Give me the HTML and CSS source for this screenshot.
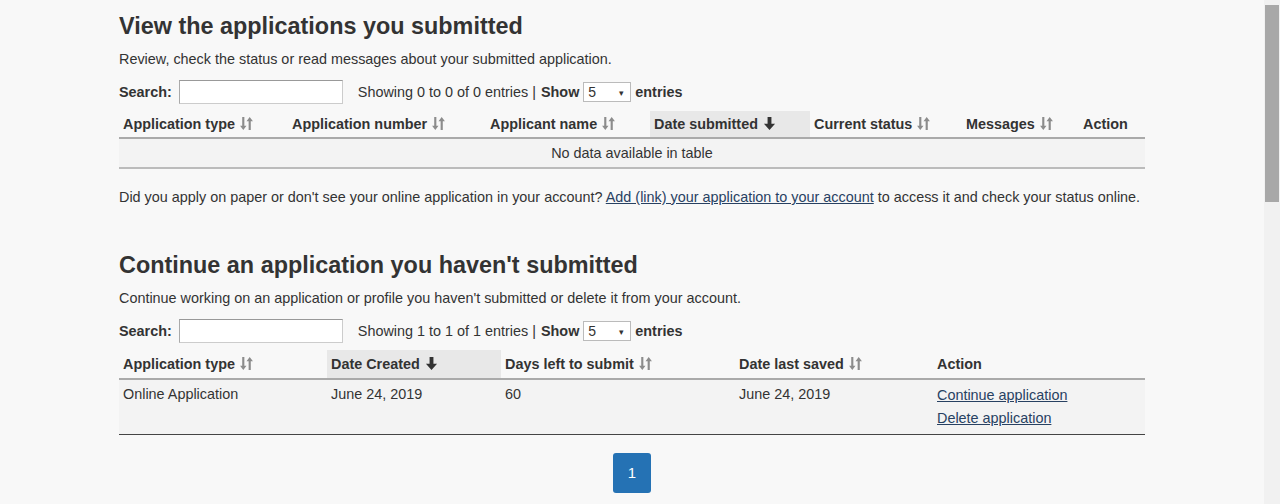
FILE: index.html
```html
<!DOCTYPE html>
<html lang="en">
<head>
    <meta charset="UTF-8">
    <title>My applications</title>
    <link rel="stylesheet" href="styles.css">
</head>
<body>
    <div class="container">
        <h2>View the applications you submitted</h2>
        <p class="intro">Review, check the status or read messages about your submitted application.</p>
        <div class="table-tools">
            <label for="search1">Search:</label>
            <input type="text" id="search1">
            <span class="info">Showing 0 to 0 of 0 entries</span>
            <span class="sep">|</span>
            <b>Show</b>
            <span class="len"><span>5</span><span class="caret">&#9662;</span></span>
            <b>entries</b>
        </div>
        <table class="data submitted">
            <thead>
                <tr>
                    <th style="width:169px">Application type <svg class="sort" viewBox="0 0 12 14"><path d="M2 1h2v8h2L3 13 0 9h2z M8 13h2V5h2L9 1 6 5h2z"/></svg></th>
                    <th style="width:198px">Application number <svg class="sort" viewBox="0 0 12 14"><path d="M2 1h2v8h2L3 13 0 9h2z M8 13h2V5h2L9 1 6 5h2z"/></svg></th>
                    <th style="width:164px">Applicant name <svg class="sort" viewBox="0 0 12 14"><path d="M2 1h2v8h2L3 13 0 9h2z M8 13h2V5h2L9 1 6 5h2z"/></svg></th>
                    <th class="active" style="width:160px">Date submitted <svg class="sorted" viewBox="0 0 12 14"><path d="M4.2 1h3.6v6.2h3.4L6 13 0.8 7.2h3.4z"/></svg></th>
                    <th style="width:152px">Current status <svg class="sort" viewBox="0 0 12 14"><path d="M2 1h2v8h2L3 13 0 9h2z M8 13h2V5h2L9 1 6 5h2z"/></svg></th>
                    <th style="width:117px">Messages <svg class="sort" viewBox="0 0 12 14"><path d="M2 1h2v8h2L3 13 0 9h2z M8 13h2V5h2L9 1 6 5h2z"/></svg></th>
                    <th>Action</th>
                </tr>
            </thead>
            <tbody>
                <tr>
                    <td colspan="7" class="empty">No data available in table</td>
                </tr>
            </tbody>
        </table>
        <p class="note">Did you apply on paper or don't see your online application in your account? <a href="#">Add (link) your application to your account</a> to access it and check your status online.</p>

        <h2 class="second">Continue an application you haven't submitted</h2>
        <p class="intro">Continue working on an application or profile you haven't submitted or delete it from your account.</p>
        <div class="table-tools">
            <label for="search2">Search:</label>
            <input type="text" id="search2">
            <span class="info">Showing 1 to 1 of 1 entries</span>
            <span class="sep">|</span>
            <b>Show</b>
            <span class="len"><span>5</span><span class="caret">&#9662;</span></span>
            <b>entries</b>
        </div>
        <table class="data drafts">
            <thead>
                <tr>
                    <th style="width:208px">Application type <svg class="sort" viewBox="0 0 12 14"><path d="M2 1h2v8h2L3 13 0 9h2z M8 13h2V5h2L9 1 6 5h2z"/></svg></th>
                    <th class="active" style="width:174px">Date Created <svg class="sorted" viewBox="0 0 12 14"><path d="M4.2 1h3.6v6.2h3.4L6 13 0.8 7.2h3.4z"/></svg></th>
                    <th style="width:234px">Days left to submit <svg class="sort" viewBox="0 0 12 14"><path d="M2 1h2v8h2L3 13 0 9h2z M8 13h2V5h2L9 1 6 5h2z"/></svg></th>
                    <th style="width:198px">Date last saved <svg class="sort" viewBox="0 0 12 14"><path d="M2 1h2v8h2L3 13 0 9h2z M8 13h2V5h2L9 1 6 5h2z"/></svg></th>
                    <th>Action</th>
                </tr>
            </thead>
            <tbody>
                <tr>
                    <td>Online Application</td>
                    <td>June 24, 2019</td>
                    <td>60</td>
                    <td>June 24, 2019</td>
                    <td class="actions">
                        <a href="#">Continue application</a>
                        <a href="#">Delete application</a>
                    </td>
                </tr>
            </tbody>
        </table>
        <div class="pager">
            <a href="#" class="page current">1</a>
        </div>
    </div>
    <div class="scrollbar"><div class="thumb"></div></div>
</body>
</html>
```

FILE: styles.css
```css
* {
    margin: 0;
    padding: 0;
    box-sizing: border-box;
}

body {
    background-color: #f8f8f8;
    color: #333;
    font-family: "Liberation Sans", Arial, sans-serif;
    font-size: 14.4px;
    line-height: 20px;
    height: 504px;
    overflow: hidden;
}

.container {
    width: 1026px;
    margin-left: 119px;
    padding-top: 12px;
}

h2 {
    font-size: 23.4px;
    line-height: 28px;
    font-weight: bold;
}

h2.second {
    margin-top: 44px;
}

.intro {
    margin-top: 9px;
}

.table-tools {
    display: flex;
    align-items: center;
    height: 24px;
    margin-top: 11px;
}

.table-tools label {
    font-weight: bold;
    margin-right: 7px;
}

.table-tools input {
    width: 164px;
    height: 24px;
    border: 1px solid #ccc;
    border-top-color: #999;
    border-left-color: #aaa;
    background: #fff;
    margin-right: 15px;
}

.table-tools .sep {
    margin: 0 5px 0 4px;
}

.len {
    position: relative;
    display: inline-flex;
    align-items: center;
    width: 48px;
    height: 20px;
    margin: 0 4px;
    padding-left: 4px;
    background: #fff;
    border: 1px solid #bbb;
    font-size: 14px;
}

.len .caret {
    position: absolute;
    right: 6px;
    top: 0;
    font-size: 9px;
    color: #333;
}

table.data {
    width: 1026px;
    border-collapse: collapse;
    margin-top: 7px;
    table-layout: fixed;
}

table.drafts {
    margin-top: 7px;
}

th {
    text-align: left;
    font-weight: bold;
    height: 27px;
    padding: 0 4px;
    border-bottom: 2px solid #aaa;
    white-space: nowrap;
}

th.active {
    background: #e8e8e8;
}

.drafts th {
    height: 29px;
}

svg.sort, svg.sorted {
    width: 13px;
    height: 15px;
    vertical-align: -2px;
    margin-left: 1px;
}

svg.sort path {
    fill: #8c8c8c;
}

svg.sorted path {
    fill: #333;
}

td {
    vertical-align: top;
    padding: 4px 4px 4px 4px;
}

tbody tr {
    background: #f3f3f3;
}

td.empty {
    text-align: center;
    height: 30px;
    padding: 4px;
}

.submitted tbody tr {
    border-bottom: 2px solid #bbb;
}

.drafts tbody tr {
    border-bottom: 1px solid #444;
}

.drafts td {
    height: 55px;
}

.actions a {
    display: block;
    line-height: 23px;
}

a {
    color: #284162;
}

.note {
    margin-top: 18px;
}

.pager {
    display: flex;
    justify-content: center;
    margin-top: 18px;
}

.page {
    display: flex;
    align-items: center;
    justify-content: center;
    width: 38px;
    height: 40px;
    border-radius: 3px;
    background: #2572b4;
    color: #fff;
    text-decoration: none;
    font-size: 15px;
}

.scrollbar {
    position: fixed;
    top: 0;
    right: 0;
    width: 16px;
    height: 504px;
    background: #f1f1f1;
}

.scrollbar .thumb {
    margin: 5px 1px 0 1px;
    height: 197px;
    background: #a8a8a8;
}
```
